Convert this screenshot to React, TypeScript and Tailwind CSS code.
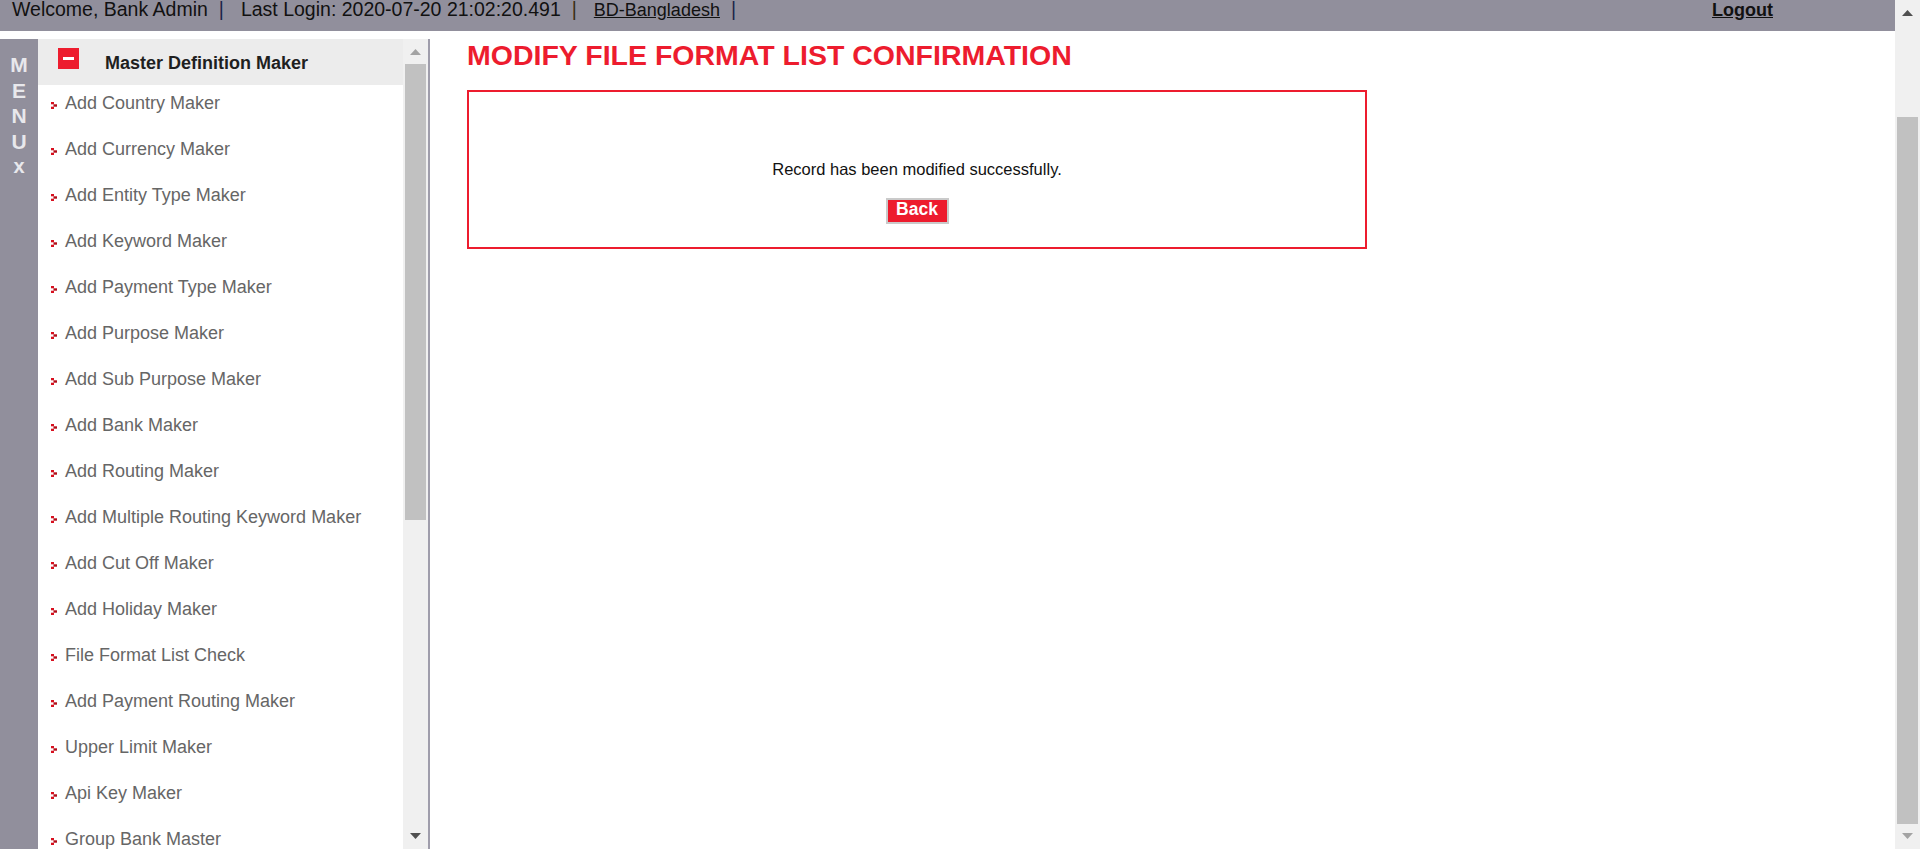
import React from "react";

const items = [
  "Add Country Maker",
  "Add Currency Maker",
  "Add Entity Type Maker",
  "Add Keyword Maker",
  "Add Payment Type Maker",
  "Add Purpose Maker",
  "Add Sub Purpose Maker",
  "Add Bank Maker",
  "Add Routing Maker",
  "Add Multiple Routing Keyword Maker",
  "Add Cut Off Maker",
  "Add Holiday Maker",
  "File Format List Check",
  "Add Payment Routing Maker",
  "Upper Limit Maker",
  "Api Key Maker",
  "Group Bank Master",
];

function Bullet() {
  return (
    <svg width="6" height="7" viewBox="0 0 6 7" className="mt-[17px] shrink-0">
      <rect x="0" y="0" width="3" height="2.3" fill="#d8101f" />
      <rect x="2.5" y="2.3" width="3.5" height="2.4" fill="#b00d18" />
      <rect x="0" y="4.7" width="3" height="2.3" fill="#d8101f" />
    </svg>
  );
}

function Tri({ dir, color }: { dir: "up" | "down"; color: string }) {
  return (
    <svg width="11" height="6" viewBox="0 0 11 6">
      {dir === "up" ? (
        <polygon points="5.5,0 11,6 0,6" fill={color} />
      ) : (
        <polygon points="0,0 11,0 5.5,6" fill={color} />
      )}
    </svg>
  );
}

export default function App() {
  return (
    <div className="w-[1920px] h-[849px] flex overflow-hidden bg-white font-['Liberation_Sans',Arial,sans-serif]">
      <div className="flex-1 min-w-0 flex flex-col">
        {/* top bar */}
        <div className="h-[31px] shrink-0 bg-[#918f9c] flex items-baseline pl-[12px] text-[19.5px] leading-[19px] text-[#111]">
          <span>Welcome, Bank Admin</span>
          <span className="ml-[11px] mr-[17px] text-[#1c2448]">|</span>
          <span>Last Login: 2020-07-20 21:02:20.491</span>
          <span className="ml-[11px] mr-[17px] text-[#3a2e10]">|</span>
          <span className="text-[18px] underline">BD-Bangladesh</span>
          <span className="ml-[11px] text-[#1c2448]">|</span>
          <span className="ml-auto mr-[122px] text-[18px] font-bold underline">Logout</span>
        </div>
        <div className="h-[8px] shrink-0" />
        <div className="flex flex-1 min-h-0">
          {/* MENU strip */}
          <div className="w-[38px] shrink-0 bg-[#918f9c] flex flex-col items-center pt-[13px] text-[21px] leading-[25.5px] font-bold text-[#e8e8ec]">
            <span>M</span>
            <span>E</span>
            <span>N</span>
            <span>U</span>
            <span className="text-[20px]">x</span>
          </div>
          {/* sidebar */}
          <div className="w-[392px] shrink-0 flex border-r-2 border-[#9f9dab]">
            <div className="w-[365px] shrink-0 flex flex-col overflow-hidden">
              <div className="h-[46px] shrink-0 bg-[#ececec] flex items-start pl-[20px]">
                <div className="mt-[9px] w-[21px] h-[21px] bg-[#ed1c2e] flex items-center justify-center">
                  <div className="w-[11px] h-[3px] bg-white" />
                </div>
                <span className="ml-[26px] mt-[14px] text-[18px] leading-[20px] font-bold text-[#1f1f1f]">
                  Master Definition Maker
                </span>
              </div>
              {items.map((t) => (
                <div key={t} className="h-[46px] shrink-0 flex items-start pl-[13px]">
                  <Bullet />
                  <span className="ml-[8px] mt-[8px] text-[18px] leading-[20px] text-[#666666] whitespace-nowrap">
                    {t}
                  </span>
                </div>
              ))}
            </div>
            <div className="w-[25px] shrink-0 bg-[#f0f0f0] flex flex-col items-center">
              <div className="h-[25px] shrink-0 flex items-center justify-center">
                <Tri dir="up" color="#a3a3a3" />
              </div>
              <div className="w-[21px] h-[456px] shrink-0 bg-[#c1c1c1]" />
              <div className="flex-1" />
              <div className="h-[25px] shrink-0 flex items-start justify-center pt-[9px]">
                <Tri dir="down" color="#505050" />
              </div>
            </div>
          </div>
          {/* main */}
          <div className="flex-1 min-w-0 pl-[37px]">
            <h1 className="text-[28.5px] leading-[32px] font-bold text-[#ed1c2e]">
              MODIFY FILE FORMAT LIST CONFIRMATION
            </h1>
            <div className="mt-[19px] w-[900px] h-[159px] border-2 border-[#ed1c2e] flex flex-col items-center pt-[68px]">
              <p className="text-[16.5px] leading-[19px] text-[#111]">Record has been modified successfully.</p>
              <div className="mt-[19px] w-[63px] h-[26px] border-2 border-[#cacaca] bg-[#ed1c2e] flex items-center justify-center pb-[3px]">
                <span className="text-[17.5px] leading-none font-bold text-white">Back</span>
              </div>
            </div>
          </div>
        </div>
      </div>
      {/* page scrollbar */}
      <div className="w-[25px] shrink-0 h-full bg-[#f0f0f0] flex flex-col items-center">
        <div className="h-[25px] shrink-0 flex items-start justify-center pt-[10px]">
          <Tri dir="up" color="#505050" />
        </div>
        <div className="h-[92px] shrink-0" />
        <div className="w-[21px] h-[707px] shrink-0 bg-[#c1c1c1]" />
        <div className="flex-1 flex items-start justify-center pt-[9px]">
          <Tri dir="down" color="#a3a3a3" />
        </div>
      </div>
    </div>
  );
}
